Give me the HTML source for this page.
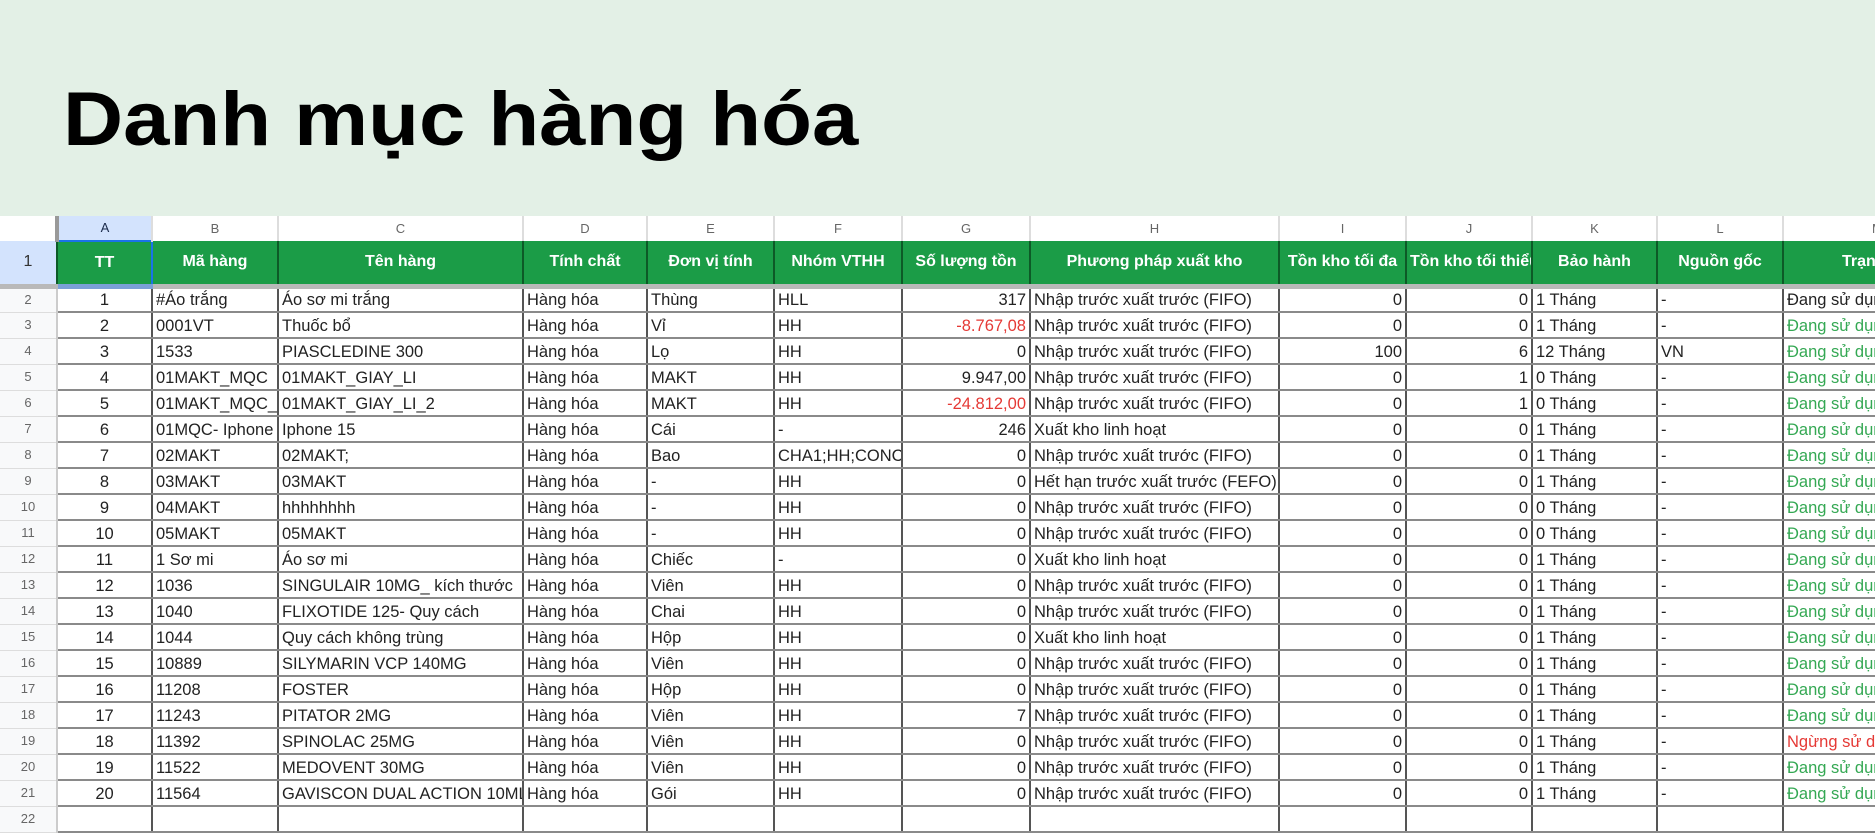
<!DOCTYPE html>
<html><head><meta charset="utf-8"><style>
*{margin:0;padding:0;box-sizing:border-box}
body{width:1875px;height:833px;overflow:hidden;background:#fff;font-family:"Liberation Sans",Arial,sans-serif;position:relative}
.banner{position:absolute;left:0;top:0;width:1875px;height:216px;background:#e3f0e6}
.title{position:absolute;left:63px;top:70px;font-size:76px;font-weight:bold;color:#000;letter-spacing:0;line-height:100px;transform:scaleX(1.095);transform-origin:left}
table{position:absolute;left:0;top:216px;border-collapse:collapse;table-layout:fixed;width:2100px}
td{height:26px;font-size:16.5px;color:#222;white-space:nowrap;overflow:hidden;padding:0 3px;border-right:2px solid #555;border-bottom:2px solid #8a8a8a;line-height:22px;vertical-align:bottom}
tr.let td{height:25px;background:#fff;color:#666;font-size:13px;text-align:center;border-right:2px solid #ddd;border-bottom:none;vertical-align:middle}
tr.let td.sel{background:#d3e3fd;color:#1a2a4a}
tr.hd td{height:45px;background:#1b9c47;color:#fff;font-weight:bold;text-align:center;font-size:16px;vertical-align:middle;border-right:2px solid #0d5a27;border-bottom:5px solid #b9b9b9}
tr.hd td.rn{background:#d3e3fd;color:#333;font-weight:normal}
td.rn{background:#f8f9fa;color:#666;font-size:13px;text-align:center;border-right:2px solid #ccc;border-bottom:1px solid #ddd;vertical-align:middle}
td.c{text-align:center}
td.r{text-align:right}
.red{color:#e53935}
.g{color:#34a853}
</style></head><body>
<div class="banner"></div>
<div class="title">Danh mục hàng hóa</div>
<table>
<colgroup><col style="width:57px"><col style="width:95px"><col style="width:126px"><col style="width:245px"><col style="width:124px"><col style="width:127px"><col style="width:128px"><col style="width:128px"><col style="width:249px"><col style="width:127px"><col style="width:126px"><col style="width:125px"><col style="width:126px"><col style="width:317px"></colgroup>
<tr class="let"><td style="border-right:4px solid #999"></td><td class="sel">A</td><td>B</td><td>C</td><td>D</td><td>E</td><td>F</td><td>G</td><td>H</td><td>I</td><td>J</td><td>K</td><td>L</td><td style="text-align:left;padding-left:88px">M</td></tr>
<tr class="hd"><td class="rn">1</td><td style="border:2px solid #1a73e8;border-bottom:5px solid #7aa0d8">TT</td><td>Mã hàng</td><td>Tên hàng</td><td>Tính chất</td><td>Đơn vị tính</td><td>Nhóm VTHH</td><td>Số lượng tồn</td><td>Phương pháp xuất kho</td><td>Tồn kho tối đa</td><td>Tồn kho tối thiểu</td><td>Bảo hành</td><td>Nguồn gốc</td><td style="text-align:left;padding-left:58px">Trạng thái</td></tr>
<tr><td class="rn">2</td><td class="c">1</td><td>#Áo trắng</td><td>Áo sơ mi trắng</td><td>Hàng hóa</td><td>Thùng</td><td>HLL</td><td class="r">317</td><td>Nhập trước xuất trước (FIFO)</td><td class="r">0</td><td class="r">0</td><td>1 Tháng</td><td>-</td><td>Đang sử dụng</td></tr>
<tr><td class="rn">3</td><td class="c">2</td><td>0001VT</td><td>Thuốc bổ</td><td>Hàng hóa</td><td>Vỉ</td><td>HH</td><td class="r red">-8.767,08</td><td>Nhập trước xuất trước (FIFO)</td><td class="r">0</td><td class="r">0</td><td>1 Tháng</td><td>-</td><td class="g">Đang sử dụng</td></tr>
<tr><td class="rn">4</td><td class="c">3</td><td>1533</td><td>PIASCLEDINE 300</td><td>Hàng hóa</td><td>Lọ</td><td>HH</td><td class="r">0</td><td>Nhập trước xuất trước (FIFO)</td><td class="r">100</td><td class="r">6</td><td>12 Tháng</td><td>VN</td><td class="g">Đang sử dụng</td></tr>
<tr><td class="rn">5</td><td class="c">4</td><td>01MAKT_MQC</td><td>01MAKT_GIAY_LI</td><td>Hàng hóa</td><td>MAKT</td><td>HH</td><td class="r">9.947,00</td><td>Nhập trước xuất trước (FIFO)</td><td class="r">0</td><td class="r">1</td><td>0 Tháng</td><td>-</td><td class="g">Đang sử dụng</td></tr>
<tr><td class="rn">6</td><td class="c">5</td><td>01MAKT_MQC_</td><td>01MAKT_GIAY_LI_2</td><td>Hàng hóa</td><td>MAKT</td><td>HH</td><td class="r red">-24.812,00</td><td>Nhập trước xuất trước (FIFO)</td><td class="r">0</td><td class="r">1</td><td>0 Tháng</td><td>-</td><td class="g">Đang sử dụng</td></tr>
<tr><td class="rn">7</td><td class="c">6</td><td>01MQC- Iphone</td><td>Iphone 15</td><td>Hàng hóa</td><td>Cái</td><td>-</td><td class="r">246</td><td>Xuất kho linh hoạt</td><td class="r">0</td><td class="r">0</td><td>1 Tháng</td><td>-</td><td class="g">Đang sử dụng</td></tr>
<tr><td class="rn">8</td><td class="c">7</td><td>02MAKT</td><td>02MAKT;</td><td>Hàng hóa</td><td>Bao</td><td>CHA1;HH;CONC</td><td class="r">0</td><td>Nhập trước xuất trước (FIFO)</td><td class="r">0</td><td class="r">0</td><td>1 Tháng</td><td>-</td><td class="g">Đang sử dụng</td></tr>
<tr><td class="rn">9</td><td class="c">8</td><td>03MAKT</td><td>03MAKT</td><td>Hàng hóa</td><td>-</td><td>HH</td><td class="r">0</td><td>Hết hạn trước xuất trước (FEFO)</td><td class="r">0</td><td class="r">0</td><td>1 Tháng</td><td>-</td><td class="g">Đang sử dụng</td></tr>
<tr><td class="rn">10</td><td class="c">9</td><td>04MAKT</td><td>hhhhhhhh</td><td>Hàng hóa</td><td>-</td><td>HH</td><td class="r">0</td><td>Nhập trước xuất trước (FIFO)</td><td class="r">0</td><td class="r">0</td><td>0 Tháng</td><td>-</td><td class="g">Đang sử dụng</td></tr>
<tr><td class="rn">11</td><td class="c">10</td><td>05MAKT</td><td>05MAKT</td><td>Hàng hóa</td><td>-</td><td>HH</td><td class="r">0</td><td>Nhập trước xuất trước (FIFO)</td><td class="r">0</td><td class="r">0</td><td>0 Tháng</td><td>-</td><td class="g">Đang sử dụng</td></tr>
<tr><td class="rn">12</td><td class="c">11</td><td>1 Sơ mi</td><td>Áo sơ mi</td><td>Hàng hóa</td><td>Chiếc</td><td>-</td><td class="r">0</td><td>Xuất kho linh hoạt</td><td class="r">0</td><td class="r">0</td><td>1 Tháng</td><td>-</td><td class="g">Đang sử dụng</td></tr>
<tr><td class="rn">13</td><td class="c">12</td><td>1036</td><td>SINGULAIR 10MG_ kích thước</td><td>Hàng hóa</td><td>Viên</td><td>HH</td><td class="r">0</td><td>Nhập trước xuất trước (FIFO)</td><td class="r">0</td><td class="r">0</td><td>1 Tháng</td><td>-</td><td class="g">Đang sử dụng</td></tr>
<tr><td class="rn">14</td><td class="c">13</td><td>1040</td><td>FLIXOTIDE 125- Quy cách</td><td>Hàng hóa</td><td>Chai</td><td>HH</td><td class="r">0</td><td>Nhập trước xuất trước (FIFO)</td><td class="r">0</td><td class="r">0</td><td>1 Tháng</td><td>-</td><td class="g">Đang sử dụng</td></tr>
<tr><td class="rn">15</td><td class="c">14</td><td>1044</td><td>Quy cách không trùng</td><td>Hàng hóa</td><td>Hộp</td><td>HH</td><td class="r">0</td><td>Xuất kho linh hoạt</td><td class="r">0</td><td class="r">0</td><td>1 Tháng</td><td>-</td><td class="g">Đang sử dụng</td></tr>
<tr><td class="rn">16</td><td class="c">15</td><td>10889</td><td>SILYMARIN VCP 140MG</td><td>Hàng hóa</td><td>Viên</td><td>HH</td><td class="r">0</td><td>Nhập trước xuất trước (FIFO)</td><td class="r">0</td><td class="r">0</td><td>1 Tháng</td><td>-</td><td class="g">Đang sử dụng</td></tr>
<tr><td class="rn">17</td><td class="c">16</td><td>11208</td><td>FOSTER</td><td>Hàng hóa</td><td>Hộp</td><td>HH</td><td class="r">0</td><td>Nhập trước xuất trước (FIFO)</td><td class="r">0</td><td class="r">0</td><td>1 Tháng</td><td>-</td><td class="g">Đang sử dụng</td></tr>
<tr><td class="rn">18</td><td class="c">17</td><td>11243</td><td>PITATOR 2MG</td><td>Hàng hóa</td><td>Viên</td><td>HH</td><td class="r">7</td><td>Nhập trước xuất trước (FIFO)</td><td class="r">0</td><td class="r">0</td><td>1 Tháng</td><td>-</td><td class="g">Đang sử dụng</td></tr>
<tr><td class="rn">19</td><td class="c">18</td><td>11392</td><td>SPINOLAC 25MG</td><td>Hàng hóa</td><td>Viên</td><td>HH</td><td class="r">0</td><td>Nhập trước xuất trước (FIFO)</td><td class="r">0</td><td class="r">0</td><td>1 Tháng</td><td>-</td><td class="red">Ngừng sử dụng</td></tr>
<tr><td class="rn">20</td><td class="c">19</td><td>11522</td><td>MEDOVENT 30MG</td><td>Hàng hóa</td><td>Viên</td><td>HH</td><td class="r">0</td><td>Nhập trước xuất trước (FIFO)</td><td class="r">0</td><td class="r">0</td><td>1 Tháng</td><td>-</td><td class="g">Đang sử dụng</td></tr>
<tr><td class="rn">21</td><td class="c">20</td><td>11564</td><td>GAVISCON DUAL ACTION 10ML</td><td>Hàng hóa</td><td>Gói</td><td>HH</td><td class="r">0</td><td>Nhập trước xuất trước (FIFO)</td><td class="r">0</td><td class="r">0</td><td>1 Tháng</td><td>-</td><td class="g">Đang sử dụng</td></tr>
<tr><td class="rn">22</td><td></td><td></td><td></td><td></td><td></td><td></td><td></td><td></td><td></td><td></td><td></td><td></td><td></td></tr>
</table>
</body></html>
